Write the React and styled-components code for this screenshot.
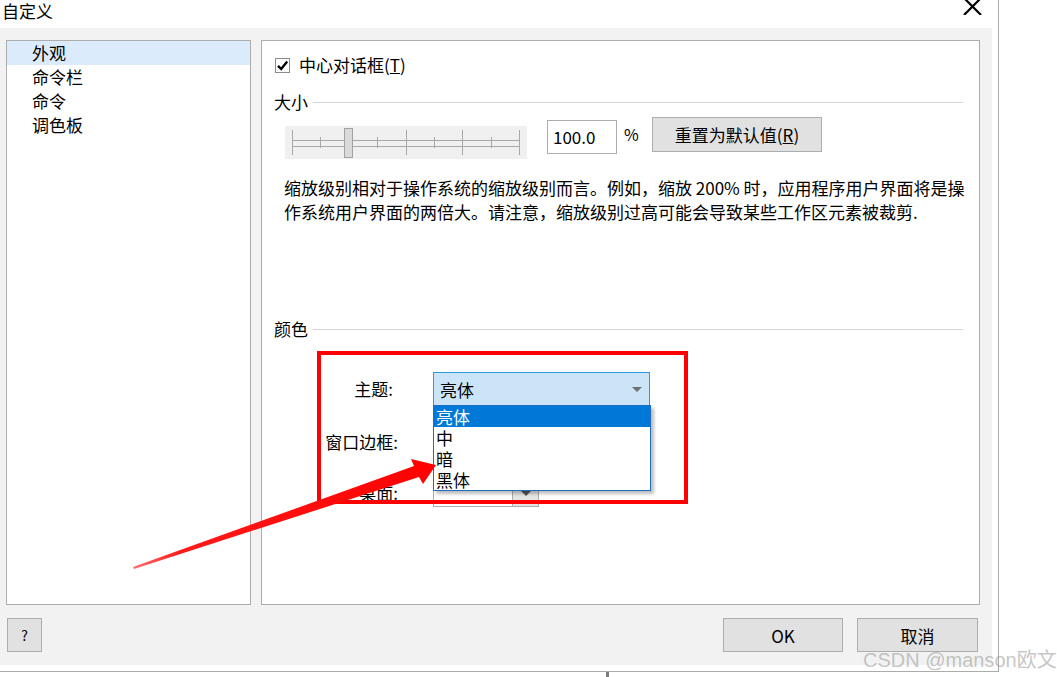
import React from "react";
import styled, { createGlobalStyle } from "styled-components";

const FONT = `"Noto Sans CJK SC", "Liberation Sans", sans-serif`;

const GlobalStyle = createGlobalStyle`
  html, body {
    margin: 0;
    padding: 0;
    background: #ffffff;
  }
  body {
    font-family: ${FONT};
    font-size: 17px;
    color: #000000;
  }
`;

const Page = styled.div`
  position: relative;
  width: 1057px;
  height: 677px;
  overflow: hidden;
  background: #ffffff;
`;

const Frame = styled.div`
  width: 999px;
  height: 672px;
  box-sizing: border-box;
  border-right: 1px solid #ababab;
  border-bottom: 1px solid #ababab;
  padding: 0 6px 6px 0;
  display: flex;
  flex-direction: column;
`;

const TitleBar = styled.div`
  height: 28px;
  flex-shrink: 0;
  display: flex;
  justify-content: space-between;
  align-items: flex-start;
`;

const Title = styled.div`
  padding: 1px 0 0 2px;
  line-height: 20px;
  font-size: 17px;
`;

const CloseIcon = styled.svg`
  margin-right: 10px;
  display: block;
`;

const Body = styled.div`
  flex: 1;
  background: #f2f2f2;
  padding: 12px 12px 0 6px;
  display: flex;
  flex-direction: column;
`;

const Main = styled.div`
  display: flex;
  gap: 10px;
  height: 565px;
`;

const ListBox = styled.div`
  width: 245px;
  flex-shrink: 0;
  box-sizing: border-box;
  border: 1px solid #adadad;
  background: #ffffff;
`;

const ListItem = styled.div`
  height: 24px;
  line-height: 24px;
  padding-left: 25px;
  background: ${(p) => (p.$active ? "#dcebfc" : "transparent")};
`;

const Panel = styled.div`
  width: 719px;
  flex-shrink: 0;
  box-sizing: border-box;
  border: 1px solid #adadad;
  background: #ffffff;
  padding: 15px 16px 0 12px;
  display: flex;
  flex-direction: column;
`;

const CheckRow = styled.label`
  display: flex;
  align-items: center;
  gap: 9px;
  height: 18px;
  margin-left: 1px;
  line-height: 18px;
`;

const CheckBox = styled.span`
  width: 15px;
  height: 15px;
  box-sizing: border-box;
  border: 1px solid #8c8c8c;
  background: #ffffff;
  display: flex;
  align-items: center;
  justify-content: center;
`;

const SectionHeader = styled.div`
  display: flex;
  align-items: center;
  gap: 5px;
  height: 20px;
  line-height: 20px;
  margin-top: ${(p) => p.$top}px;
`;

const Rule = styled.div`
  flex: 1;
  height: 1px;
  background: #d7d7d7;
`;

const SizeRow = styled.div`
  display: flex;
  align-items: flex-start;
  margin-top: 5px;
`;

const SliderBox = styled.div`
  margin: 9px 0 0 11px;
  width: 242px;
  height: 33px;
  background: #f0f0f0;
`;

const NumberBox = styled.div`
  margin: 3px 0 0 20px;
  width: 70px;
  height: 34px;
  box-sizing: border-box;
  border: 1px solid #adadad;
  padding-left: 5px;
  line-height: 32px;
  background: #ffffff;
`;

const Percent = styled.div`
  margin: 7px 0 0 7px;
  width: 14px;
  line-height: 20px;
  font-size: 16px;
`;

const PushButton = styled.div`
  width: ${(p) => p.$w}px;
  height: ${(p) => p.$h || 34}px;
  margin-left: ${(p) => p.$ml || 0}px;
  flex-shrink: 0;
  box-sizing: border-box;
  border: 1px solid #adadad;
  background: #e1e1e1;
  display: flex;
  align-items: center;
  justify-content: center;
  font-size: ${(p) => p.$fs || 17}px;
`;

const Description = styled.p`
  margin: 17px 0 0 10px;
  line-height: 24px;
  white-space: nowrap;
`;

const FormGrid = styled.div`
  margin-top: 33px;
  display: grid;
  grid-template-columns: 124px 217px;
  grid-template-rows: 34px 34px 29px;
  column-gap: 35px;
  row-gap: 19px;
`;

const FieldLabel = styled.div`
  justify-self: end;
  align-self: center;
  padding-right: ${(p) => p.$pr || 0}px;
  line-height: 20px;
`;

const ThemeSelect = styled.div`
  position: relative;
  z-index: 2;
  box-sizing: border-box;
  border: 1px solid #2b9be0;
  background: #cce4f7;
  display: flex;
  align-items: center;
  justify-content: space-between;
  padding: 0 7px 0 6px;
`;

const Caret = styled.span`
  width: 0;
  height: 0;
  border-left: 5px solid transparent;
  border-right: 5px solid transparent;
  border-top: 5px solid ${(p) => p.$color || "#707070"};
`;

const DropList = styled.div`
  position: absolute;
  top: 100%;
  left: -1px;
  width: 218px;
  box-sizing: border-box;
  border: 1px solid #1c6dc3;
  background: #ffffff;
  box-shadow: 3px 3px 3px rgba(0, 0, 0, 0.25);
`;

const DropOption = styled.div`
  height: 21px;
  line-height: 21px;
  padding-left: 2px;
  background: ${(p) => (p.$selected ? "#0078d7" : "#ffffff")};
  color: ${(p) => (p.$selected ? "#ffffff" : "#000000")};
`;

const SmallSelect = styled.div`
  width: 106px;
  height: 27px;
  align-self: end;
  box-sizing: border-box;
  border: 1px solid #adadad;
  background: #ffffff;
  display: flex;
  justify-content: flex-end;
`;

const SmallSelectButton = styled.div`
  width: 25px;
  border-left: 1px solid #adadad;
  background: #e5e5e5;
  display: flex;
  align-items: center;
  justify-content: center;
`;

const Footer = styled.div`
  display: flex;
  align-items: flex-start;
  padding: 13px 2px 0 1px;
`;

const Spacer = styled.div`
  flex: 1;
`;

const RedFrame = styled.div`
  position: absolute;
  left: 317px;
  top: 351px;
  width: 371px;
  height: 153px;
  box-sizing: border-box;
  border: 4px solid #ff0000;
  z-index: 5;
`;

const ArrowLayer = styled.svg`
  position: absolute;
  left: 0;
  top: 0;
  z-index: 6;
  pointer-events: none;
`;

const Watermark = styled.div`
  position: absolute;
  left: 863px;
  top: 647px;
  z-index: 7;
  font-family: "Liberation Sans", "Noto Sans CJK SC", sans-serif;
  font-size: 20px;
  line-height: 26px;
  color: rgba(150, 150, 150, 0.55);
  white-space: nowrap;
`;

const ScrollMark = styled.div`
  margin-left: 606px;
  width: 3px;
  height: 5px;
  background: #7d7d7d;
`;

const menu = ["外观", "命令栏", "命令", "调色板"];
const themes = ["亮体", "中", "暗", "黑体"];

const Slider = () => {
  const ticks = [
    [7, true],
    [35, false],
    [92, false],
    [121, true],
    [149, false],
    [177, true],
    [206, false],
    [234, true],
  ];
  return (
    <SliderBox>
      <svg width="242" height="33">
        <line x1="7" y1="14.5" x2="234" y2="14.5" stroke="#a8a8a8" />
        <line x1="7" y1="20.5" x2="234" y2="20.5" stroke="#a8a8a8" />
        {ticks.map(([x, tall]) => (
          <line
            key={x}
            x1={x + 0.5}
            x2={x + 0.5}
            y1={tall ? 4 : 11}
            y2={tall ? 29 : 22}
            stroke="#a8a8a8"
          />
        ))}
        <rect x="59.5" y="2.5" width="8" height="29" fill="#dadada" stroke="#a3a3a3" />
      </svg>
    </SliderBox>
  );
};

const App = () => {
  return (
    <Page>
      <GlobalStyle />
      <Frame>
        <TitleBar>
          <Title>自定义</Title>
          <CloseIcon width="19" height="15" viewBox="0 0 19 15">
            <path d="M1 -2 L18 15 M18 -2 L1 15" stroke="#000" strokeWidth="2.2" fill="none" />
          </CloseIcon>
        </TitleBar>
        <Body>
          <Main>
            <ListBox>
              {menu.map((m, i) => (
                <ListItem key={m} $active={i === 0}>
                  {m}
                </ListItem>
              ))}
            </ListBox>
            <Panel>
              <CheckRow>
                <CheckBox>
                  <svg width="13" height="13" viewBox="0 0 13 13">
                    <path d="M2 6.8 L5.2 10 L11.2 2.6" stroke="#000" strokeWidth="2.4" fill="none" />
                  </svg>
                </CheckBox>
                <span>
                  中心对话框(<u>T</u>)
                </span>
              </CheckRow>
              <SectionHeader $top={18}>
                <span>大小</span>
                <Rule />
              </SectionHeader>
              <SizeRow>
                <Slider />
                <NumberBox>100.0</NumberBox>
                <Percent>%</Percent>
                <PushButton $w={170} $h={35} $ml={14}>
                  <span>
                    重置为默认值(<u>R</u>)
                  </span>
                </PushButton>
              </SizeRow>
              <Description>
                缩放级别相对于操作系统的缩放级别而言。例如，缩放 200% 时，应用程序用户界面将是操
                <br />
                作系统用户界面的两倍大。请注意，缩放级别过高可能会导致某些工作区元素被裁剪.
              </Description>
              <SectionHeader $top={95}>
                <span>颜色</span>
                <Rule />
              </SectionHeader>
              <FormGrid>
                <FieldLabel $pr={5}>主题:</FieldLabel>
                <ThemeSelect>
                  <span>亮体</span>
                  <Caret />
                  <DropList>
                    {themes.map((t, i) => (
                      <DropOption key={t} $selected={i === 0}>
                        {t}
                      </DropOption>
                    ))}
                  </DropList>
                </ThemeSelect>
                <FieldLabel>窗口边框:</FieldLabel>
                <div />
                <FieldLabel>桌面:</FieldLabel>
                <SmallSelect>
                  <SmallSelectButton>
                    <Caret $color="#555" />
                  </SmallSelectButton>
                </SmallSelect>
              </FormGrid>
            </Panel>
          </Main>
          <Footer>
            <PushButton $w={35} $fs={14}>?</PushButton>
            <Spacer />
            <PushButton $w={120}>OK</PushButton>
            <PushButton $w={121} $ml={14}>取消</PushButton>
          </Footer>
        </Body>
      </Frame>
      <ScrollMark />
      <RedFrame />
      <ArrowLayer width="1057" height="677">
        <defs>
          <linearGradient id="tailFade" x1="133" y1="567" x2="437" y2="463" gradientUnits="userSpaceOnUse">
            <stop offset="0" stopColor="#ff7070" />
            <stop offset="0.15" stopColor="#ff1a1a" />
            <stop offset="1" stopColor="#ff0000" />
          </linearGradient>
        </defs>
        <polygon
          points="133,567 414,466 411,459 436,465 423,484 419,477 134,569"
          fill="url(#tailFade)"
        />
      </ArrowLayer>
      <Watermark>CSDN @manson欧文</Watermark>
    </Page>
  );
};

export default App;
